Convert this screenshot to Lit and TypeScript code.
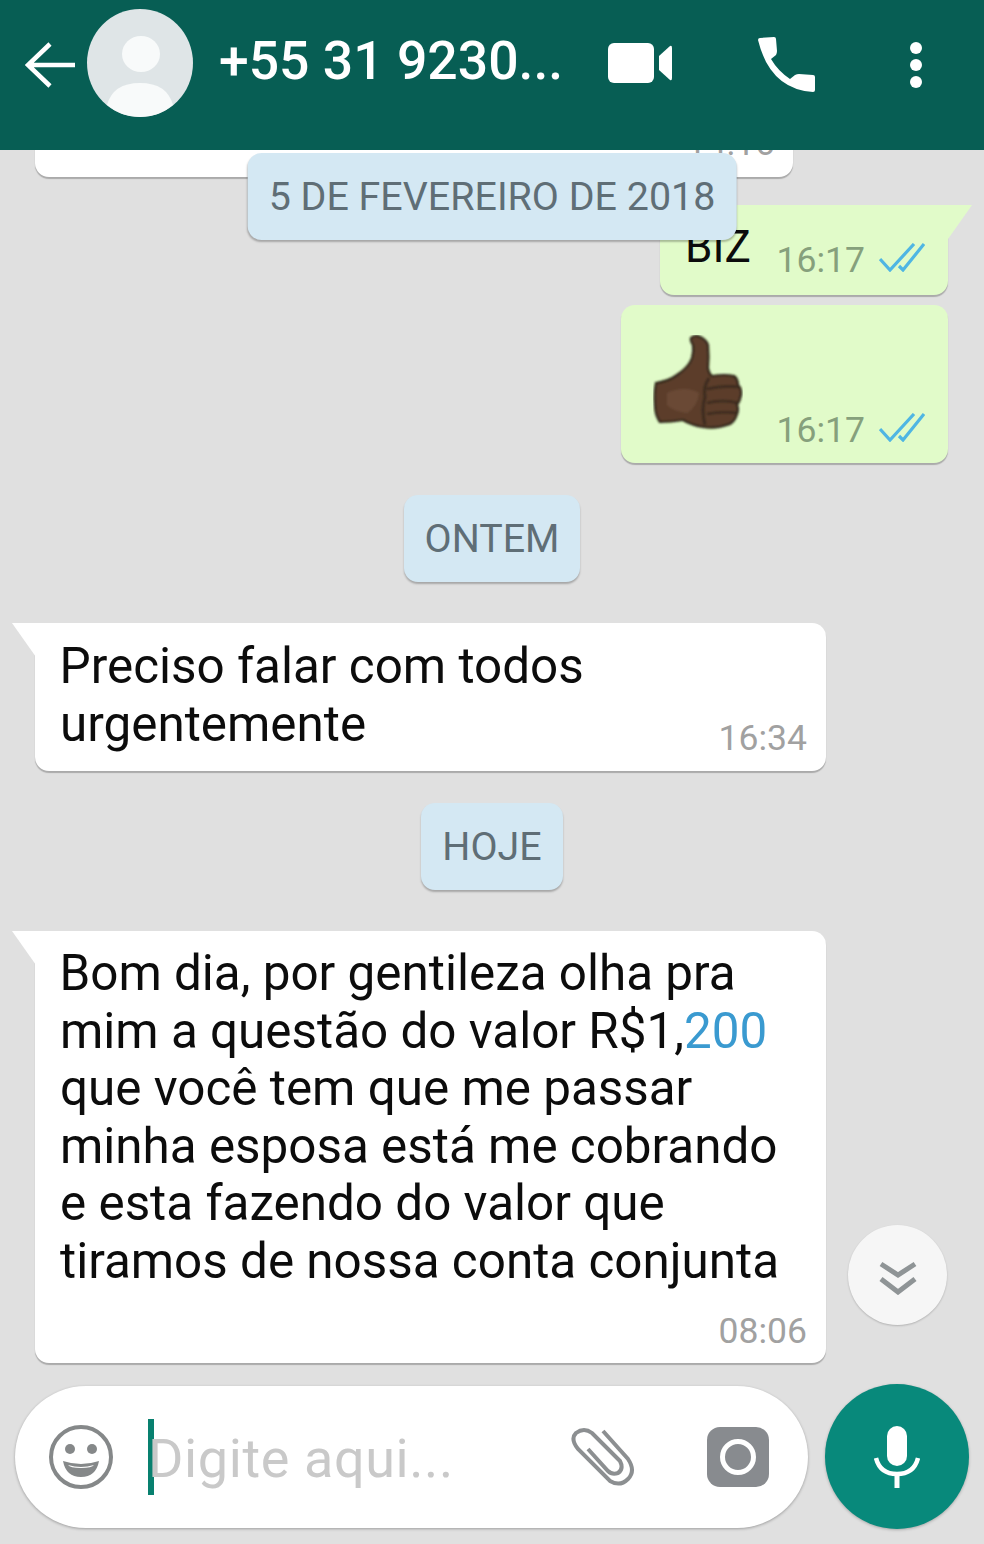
import { LitElement, html, css, svg } from 'lit';
import { customElement } from 'lit/decorators.js';

const ticks = html`
  <svg class="ticks" viewBox="0 0 46 29" fill="none" stroke="#4fb6e3" stroke-width="3.2">
    <path d="M1 16l10 11L35 1" />
    <path d="M20 23l4 4L45 1" />
  </svg>
`;

const thumb = svg`
  <defs>
    <filter id="soft" x="-5%" y="-5%" width="110%" height="110%">
      <feGaussianBlur stdDeviation="0.8" />
    </filter>
  </defs>
  <g filter="url(#soft)">
    <path d="M3 48Q16 46 24 40Q36 32 39 23Q41 16 40 10Q37 5 38 3Q41 0 45 1Q53 4 55 10Q56 22 55 33Q56 39 59 41Q72 39 81 41Q85 44 85 50Q89 54 88 60Q87 66 84 70Q86 74 84 79Q82 86 77 89Q64 94 50 92Q38 90 30 85Q18 87 7 87Q2 80 2 70Q1 58 3 48Z" fill="#5b3e2c" stroke="#2b2117" stroke-width="2.2" />
    <path d="M14 58Q32 50 46 58Q44 72 34 78Q20 76 14 70Z" fill="#6b4a36" />
    <path d="M56 43Q50 52 52 62Q48 74 52 90" fill="none" stroke="#3b2a1f" stroke-width="3" />
    <path d="M54 54Q70 50 86 52M54 68Q70 64 85 68M54 79Q68 76 84 78" fill="none" stroke="#3b2a1f" stroke-width="2.6" />
  </g>
`;

@customElement('app-root')
export class AppRoot extends LitElement {
  static styles = css`
    :host {
      display: block;
      width: 984px;
      height: 1544px;
      overflow: hidden;
      background: #e0e0e0;
      font-family: Roboto, "Liberation Sans", sans-serif;
    }

    .page {
      display: flex;
      flex-direction: column;
      height: 1544px;
    }

    .header {
      position: relative;
      z-index: 3;
      flex: none;
      display: flex;
      align-items: flex-start;
      height: 150px;
      box-sizing: border-box;
      padding: 9px 0 0 25px;
      background: #075e54;
      color: #fff;
    }

    .back {
      width: 50px;
      height: 46px;
      margin: 33px 12px 0 0;
    }

    .avatar {
      width: 106px;
      height: 108px;
    }

    .title {
      width: 389px;
      margin: 21px 0 0 26px;
      font-size: 53.5px;
      line-height: 62px;
      font-weight: 500;
      white-space: nowrap;
    }

    .video {
      width: 64px;
      height: 40px;
      margin: 34px 86px 0 0;
    }

    .call {
      width: 58px;
      height: 57px;
      margin: 28px 93px 0 0;
    }

    .dots {
      width: 14px;
      height: 48px;
      margin-top: 32px;
    }

    .chat {
      position: relative;
      flex: 1;
      min-height: 0;
      overflow: hidden;
      display: flex;
      flex-direction: column;
      justify-content: flex-end;
      box-sizing: border-box;
      padding-bottom: 21px;
    }

    .bubble {
      position: relative;
      flex: none;
      box-sizing: border-box;
      border-radius: 14px;
      color: #0c0c0c;
      font-size: 49.4px;
      line-height: 57.5px;
      box-shadow: 0 2px 1px rgba(0, 0, 0, 0.24);
    }

    .in {
      align-self: flex-start;
      margin-left: 35px;
      background: #fff;
    }

    .out {
      align-self: flex-end;
      margin-right: 36px;
      background: #e1fbc9;
    }

    .tail.in {
      border-top-left-radius: 0;
    }

    .tail.out {
      border-top-right-radius: 0;
    }

    .tail::before {
      content: '';
      position: absolute;
      top: 0;
      width: 24px;
      height: 34px;
      background: inherit;
    }

    .tail.in::before {
      left: -23px;
      clip-path: polygon(0 0, 100% 0, 100% 100%);
    }

    .tail.out::before {
      right: -24px;
      clip-path: polygon(0 0, 100% 0, 0 100%);
    }

    .time {
      font-size: 35.5px;
      line-height: 40px;
      color: #a1a1a1;
      white-space: nowrap;
    }

    .out .time {
      color: #86a07c;
    }

    .meta {
      display: flex;
      align-items: center;
      gap: 14px;
    }

    .ticks {
      flex: none;
      width: 46px;
      height: 29px;
      margin-top: -5px;
    }

    .clipped {
      width: 758px;
      height: 120px;
      margin-bottom: 28px;
      display: flex;
      align-items: flex-end;
      justify-content: flex-end;
      padding: 0 18px 14px 0;
    }

    .biz {
      width: 288px;
      height: 90px;
      margin-bottom: 10px;
      display: flex;
      justify-content: space-between;
      align-items: flex-start;
      padding: 34px 23px 0 25px;
    }

    .biz .text {
      line-height: 48px;
      font-size: 44px;
      margin-top: -16px;
    }

    .biz .meta {
      margin-top: 1px;
    }

    .sticker {
      width: 327px;
      height: 158px;
      margin-bottom: 32px;
      display: flex;
      justify-content: space-between;
      align-items: flex-start;
      padding: 30px 23px 0 32px;
    }

    .emoji-thumb {
      flex: none;
      width: 90px;
      height: 98px;
    }

    .sticker .meta {
      margin-top: 75px;
    }

    .day {
      flex: none;
      align-self: center;
      box-sizing: border-box;
      height: 87px;
      padding: 0 21px;
      display: flex;
      align-items: center;
      border-radius: 14px;
      background: #d4e8f3;
      color: #5f6e76;
      font-size: 39.4px;
      white-space: nowrap;
      box-shadow: 0 2px 2px rgba(0, 0, 0, 0.26);
    }

    .day.gap {
      margin-bottom: 41px;
    }

    .day.floating {
      position: absolute;
      z-index: 2;
      top: 3px;
      left: 50%;
      transform: translateX(-50%);
    }

    .wide {
      width: 791px;
      padding: 15px 19px 0 25px;
      text-indent: -0.5px;
    }

    .urgent {
      height: 148px;
      margin-bottom: 32px;
      display: flex;
      justify-content: space-between;
      align-items: flex-start;
    }

    .urgent .time {
      align-self: flex-end;
      margin-bottom: 13px;
    }

    .message {
      height: 432px;
      padding-top: 14px;
      display: flex;
      flex-direction: column;
    }

    .message .time {
      align-self: flex-end;
      margin-top: 21px;
    }

    .link {
      color: #3a9ad0;
    }

    .down {
      position: absolute;
      right: 37px;
      bottom: 59px;
      width: 99px;
      height: 100px;
      box-sizing: border-box;
      padding-top: 6px;
      border-radius: 50%;
      background: #f6f6f6;
      display: flex;
      align-items: center;
      justify-content: center;
      box-shadow: 0 1px 2px rgba(0, 0, 0, 0.2);
    }

    .down svg {
      width: 38px;
      height: 34px;
    }

    .composer {
      flex: none;
      display: flex;
      align-items: center;
      gap: 17px;
      padding: 0 15px 15px;
    }

    .field {
      display: flex;
      align-items: center;
      width: 793px;
      height: 142px;
      box-sizing: border-box;
      padding: 0 39px 0 33px;
      border-radius: 71px;
      background: #fff;
      box-shadow: 0 1px 3px rgba(0, 0, 0, 0.3);
    }

    .emoji {
      flex: none;
      width: 66px;
      height: 66px;
      margin-right: 34px;
    }

    .caret {
      flex: none;
      width: 6px;
      height: 76px;
      margin-right: -6px;
      background: #08806f;
    }

    .placeholder {
      flex: 1;
      padding-top: 3px;
      color: #c9c9c9;
      font-size: 54px;
      letter-spacing: 0.6px;
      white-space: nowrap;
    }

    .clip {
      flex: none;
      width: 66px;
      height: 60px;
      margin-right: 71px;
    }

    .camera {
      flex: none;
      width: 62px;
      height: 60px;
    }

    .mic {
      flex: none;
      width: 144px;
      height: 145px;
      border-radius: 50%;
      background: #08897b;
      display: flex;
      align-items: center;
      justify-content: center;
      box-shadow: 0 1px 3px rgba(0, 0, 0, 0.25);
    }

    .mic svg {
      width: 46px;
      height: 62px;
    }
  `;

  render() {
    return html`
      <div class="page">
        <div class="header">
          <svg class="back" viewBox="0 0 50 46" fill="none" stroke="#fff" stroke-width="4.5">
            <path d="M50 23H4M25 2L3 23l22 21" />
          </svg>
          <svg class="avatar" viewBox="0 0 106 108">
            <ellipse cx="53" cy="54" rx="53" ry="54" fill="#dfe5e7" />
            <ellipse cx="54" cy="45" rx="19" ry="18" fill="#f8fafa" />
            <path d="M20 96Q26 74 53 74Q80 74 86 96Q72 108 53 108Q34 108 20 96Z" fill="#f8fafa" />
          </svg>
          <div class="title">+55 31 9230...</div>
          <svg class="video" viewBox="0 0 64 40" fill="#fff">
            <rect x="0" y="0" width="46" height="40" rx="6" />
            <path d="M51 13L62 3Q64 2 64 5V35Q64 38 62 37L51 27Z" />
          </svg>
          <svg class="call" viewBox="0 0 58 57" fill="#fff">
            <path d="M2 1L16 0Q18 0 18 2L19 14Q19 16 18 18L13 22Q20 34 32 42L37 38Q39 37 41 37L55 38Q57 38 57 40L57 53Q57 55 55 55Q12 52 0 3Q0 1 2 1Z" />
          </svg>
          <svg class="dots" viewBox="0 0 14 48" fill="#fff">
            <circle cx="7" cy="7" r="6" />
            <circle cx="7" cy="24" r="6" />
            <circle cx="7" cy="41" r="6" />
          </svg>
        </div>

        <div class="chat">
          <div class="bubble in clipped"><span class="time">14:16</span></div>

          <div class="bubble out tail biz">
            <span class="text">BIZ</span>
            <span class="meta"><span class="time">16:17</span>${ticks}</span>
          </div>

          <div class="bubble out sticker">
            <svg class="emoji-thumb" viewBox="0 0 90 98">${thumb}</svg>
            <span class="meta"><span class="time">16:17</span>${ticks}</span>
          </div>

          <div class="day gap">ONTEM</div>

          <div class="bubble in tail wide urgent">
            <span>Preciso falar com todos<br />urgentemente</span>
            <span class="time">16:34</span>
          </div>

          <div class="day gap">HOJE</div>

          <div class="bubble in tail wide message">
            <span>
              Bom dia, por gentileza olha pra<br />
              mim a questão do valor R$1,<span class="link">200</span><br />
              que você tem que me passar<br />
              minha esposa está me cobrando<br />
              e esta fazendo do valor que<br />
              tiramos de nossa conta conjunta
            </span>
            <span class="time">08:06</span>
          </div>

          <div class="day floating">5 DE FEVEREIRO DE 2018</div>

          <div class="down">
            <svg viewBox="0 0 38 34" fill="none" stroke="#8f9496" stroke-width="5">
              <path d="M2 3l17 11L36 3M2 18l17 13 17-13" />
            </svg>
          </div>
        </div>

        <div class="composer">
          <div class="field">
            <svg class="emoji" viewBox="0 0 66 66">
              <circle cx="33" cy="33" r="30" fill="none" stroke="#858889" stroke-width="4" />
              <circle cx="22" cy="25" r="5" fill="#858889" />
              <circle cx="44" cy="25" r="5" fill="#858889" />
              <path d="M15 37Q33 43 51 37Q48 53 33 53Q18 53 15 37Z" fill="#858889" />
              <path d="M20 41Q33 45 46 41Q44 44 33 44Q22 44 20 41Z" fill="#fff" />
            </svg>
            <span class="caret"></span>
            <span class="placeholder">Digite aqui...</span>
            <svg class="clip" viewBox="0 0 66 60" fill="none" stroke="#8c8f91" stroke-width="4">
              <path d="M33 4L58 32Q66 44 58 52Q50 60 40 54L8 22Q0 12 6 6Q14 0 22 6L50 34Q54 42 48 46Q42 48 38 44L18 22" />
            </svg>
            <svg class="camera" viewBox="0 0 62 60">
              <rect width="62" height="60" rx="13" fill="#888b8f" />
              <circle cx="31" cy="30" r="15.5" fill="none" stroke="#fff" stroke-width="5" />
            </svg>
          </div>
          <div class="mic">
            <svg viewBox="0 0 46 62" fill="none" stroke="#fff">
              <rect x="13" y="0" width="20" height="40" rx="10" fill="#fff" stroke="none" />
              <path d="M2 32Q6 48 23 48Q40 48 44 32" stroke-width="4.5" />
              <path d="M23 46V62" stroke-width="5" />
            </svg>
          </div>
        </div>
      </div>
    `;
  }
}

declare global {
  interface HTMLElementTagNameMap {
    'app-root': AppRoot;
  }
}
